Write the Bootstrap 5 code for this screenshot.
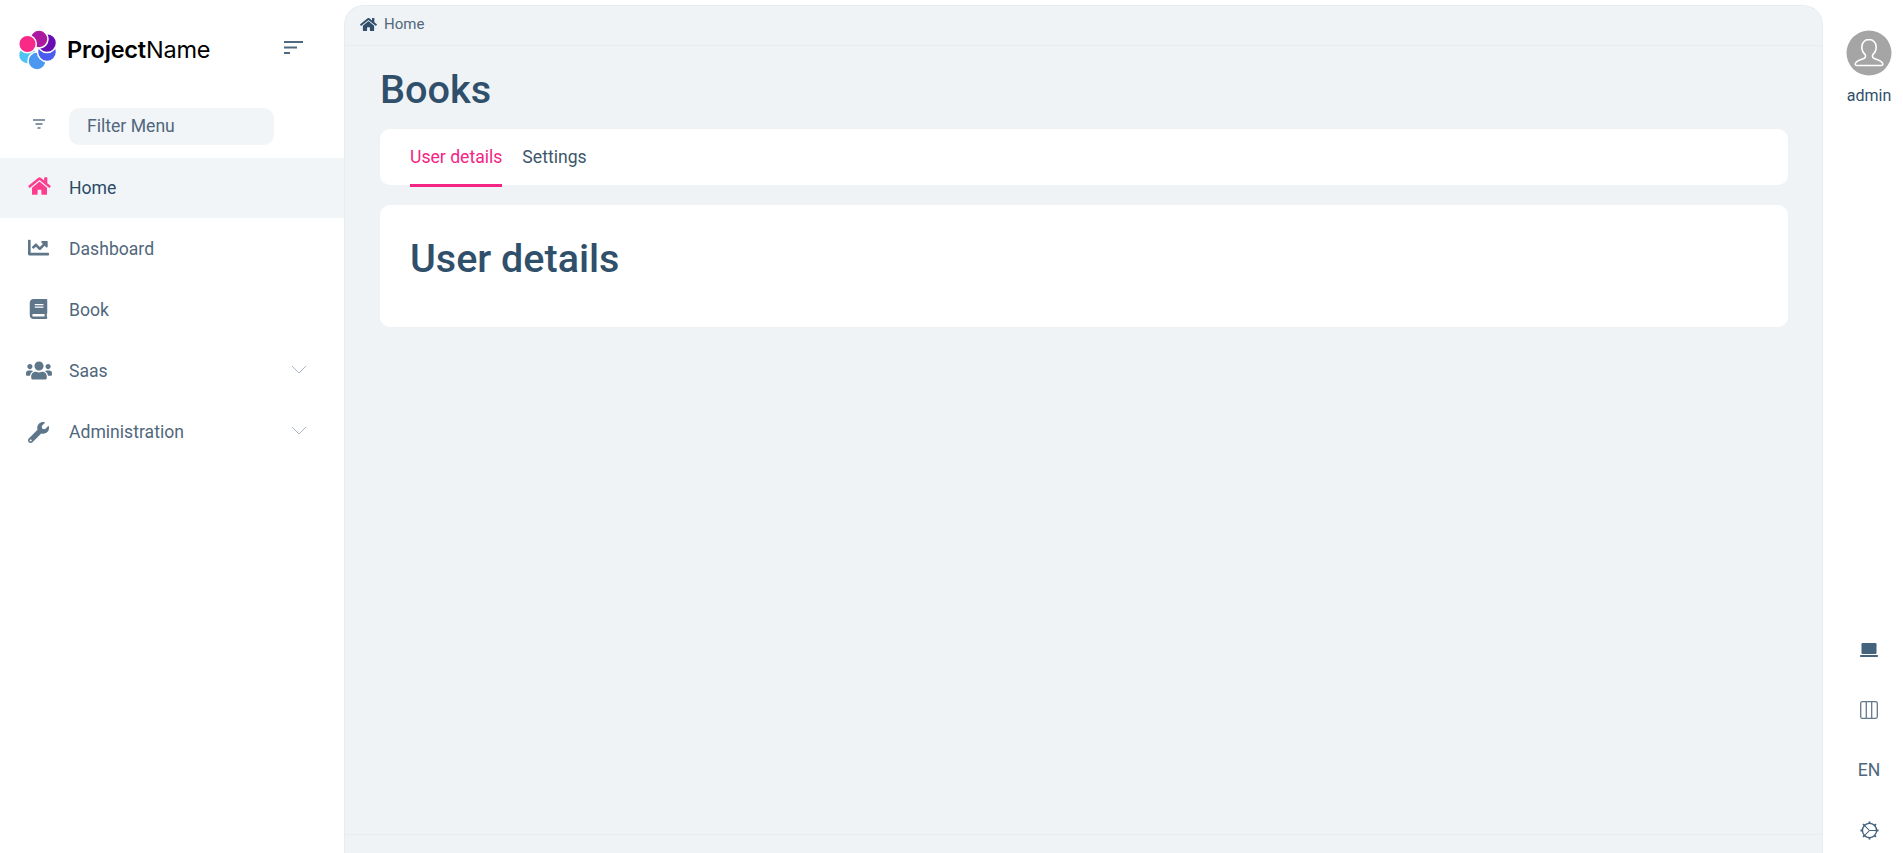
<!DOCTYPE html>
<html lang="en">
<head>
  <meta charset="UTF-8">
  <meta name="viewport" content="width=device-width, initial-scale=1">
  <title>Books - ProjectName</title>
  <link href="https://cdn.jsdelivr.net/npm/bootstrap@5.3.0/dist/css/bootstrap.min.css" rel="stylesheet">
  <style>
    body { font-family: Roboto, "Liberation Sans", sans-serif; color: #2f4f6b; background: #fff; }
    .app-shell { height: 853px; overflow: hidden; }
    .side-menu { width: 344px; flex-shrink: 0; }
    .brand-row { height: 100px; padding: 30px 40px 0 19px; }
    .brand-name { font-family: Inter, sans-serif; font-size: 23.5px; letter-spacing: -.2px; color: #000; margin-left: 10px; line-height: 40px; }
    .brand-toggle { margin-left: auto; margin-top: -2px; }
    .filter-row { height: 58px; padding: 8px 0 0 32px; }
    .filter-box { width: 205px; height: 37px; margin-left: 23px; background: #f2f5f8; border-radius: 10px; padding-left: 18px; line-height: 37px; font-size: 17.6px; color: #50677c; }
    .menu-row { height: 61px; color: #50677c; font-size: 17.6px; text-decoration: none; padding-right: 37px; }
    .menu-row.is-active { height: 60px; background: #f2f5f8; color: #2a4a66; margin-bottom: 1px; }
    .menu-icon { width: 69px; flex-shrink: 0; }
    .menu-icon svg { fill: #5e7689; margin-left: 28px; display: block; }
    .menu-icon svg.icon-wide { margin-left: 26px; }
    .is-active .menu-icon svg { fill: #ff3d8f; }
    .menu-arrow { margin-left: auto; margin-bottom: 3px; }
    .nudge-up { margin-bottom: 3px; }
    .main-panel { background: #eff3f6; border: 1px solid #e7ecf1; border-bottom: 0; border-radius: 20px 20px 0 0; margin-top: 5px; min-width: 0; }
    .crumb-bar { height: 40px; border-bottom: 1px solid #e7ecf1; padding: 0 0 2px 15px; font-size: 15px; color: #50677c; }
    .crumb-bar svg { fill: #2f4f6b; margin-right: 7px; }
    .page-body { padding: 0 34px 0 35px; }
    .page-title { font-size: 39.7px; font-weight: 500; color: #2f4f6b; line-height: 1.2; margin: 20px 0 15px; }
    .tab-card { background: #fff; border-radius: 10px; height: 56px; padding-left: 30px; margin-bottom: 20px; }
    .tab-link { font-size: 17.6px; color: #3c566c; margin-right: 20px; line-height: 56px; height: 58px; text-decoration: none; }
    .tab-link.is-on { color: #f32484; border-bottom: 3px solid #f32484; }
    .detail-card { background: #fff; border-radius: 10px; height: 122px; padding: 30px; }
    .detail-card h2 { font-size: 39.5px; font-weight: 500; color: #2f4f6b; line-height: 1.2; margin: 0; }
    .foot-line { height: 19px; border-top: 1px solid #e7ecf1; }
    .right-rail { width: 80px; flex-shrink: 0; padding-left: 12px; }
    .user-pic { margin-top: 30px; }
    .admin-name { font-size: 16px; color: #2f4f6b; margin-top: 8px; }
    .rail-tools { margin-bottom: -7px; }
    .rail-btn { height: 60px; font-size: 17.6px; color: #50677c; }
  </style>
</head>
<body>

<div class="app-shell d-flex">

  <div class="side-menu d-flex flex-column">
    <div class="brand-row d-flex align-items-start">
      <svg width="38" height="40" viewBox="0 0 38 40">
        <g stroke="#fff" stroke-width="1.5">
          <circle cx="8.5" cy="25" r="9" fill="#4fc3f1"/>
          <circle cx="18" cy="31" r="9" fill="#4a98f2"/>
          <circle cx="28" cy="22" r="9.5" fill="#4a5cf0"/>
          <circle cx="28" cy="13" r="9.5" fill="#6a0db0"/>
          <circle cx="20" cy="9" r="9" fill="#ab1a9e"/>
          <circle cx="8.5" cy="14" r="8.8" fill="#f92a87"/>
        </g>
      </svg>
      <span class="brand-name"><b class="fw-semibold">Project</b>Name</span>
      <svg class="brand-toggle" width="22" height="40" viewBox="0 0 22 40" stroke="#4f6a80" stroke-width="2"><path d="M2 14h19M2 19.5h13M2 25h6"/></svg>
    </div>
    <div class="filter-row d-flex">
      <svg class="mt-2" width="14" height="21" viewBox="0 0 14 21" stroke="#5e7689" stroke-width="1.4"><path d="M1 4h12M3.5 8h7M5.5 12h3"/></svg>
      <div class="filter-box">Filter Menu</div>
    </div>

    <a href="#" class="menu-row is-active d-flex align-items-center">
      <span class="menu-icon mb-1"><svg width="23" height="20" viewBox="0 0 576 512"><path d="M280.37 148.26L96 300.11V464a16 16 0 0 0 16 16l112.06-.29a16 16 0 0 0 15.92-16V368a16 16 0 0 1 16-16h64a16 16 0 0 1 16 16v95.64a16 16 0 0 0 16 16.05L464 480a16 16 0 0 0 16-16V300L295.67 148.26a12.19 12.19 0 0 0-15.3 0zM571.6 251.47L488 182.56V44.05a12 12 0 0 0-12-12h-56a12 12 0 0 0-12 12v72.61L318.47 43a48 48 0 0 0-61 0L4.34 251.47a12 12 0 0 0-1.6 16.9l25.5 31A12 12 0 0 0 45.15 301l235.22-193.74a12.19 12.19 0 0 1 15.3 0L530.9 301a12 12 0 0 0 16.9-1.6l25.5-31a12 12 0 0 0-1.7-16.93z"/></svg></span>
      Home
    </a>
    <a href="#" class="menu-row d-flex align-items-center">
      <span class="menu-icon mb-1"><svg width="21" height="21" viewBox="0 0 512 512"><path d="M496 384H64V80c0-8.84-7.16-16-16-16H16C7.16 64 0 71.16 0 80v336c0 17.67 14.33 32 32 32h464c8.84 0 16-7.16 16-16v-32c0-8.84-7.16-16-16-16zM464 96H345.94c-21.38 0-32.09 25.85-16.97 40.97l32.4 32.4L288 242.75l-73.37-73.37c-12.5-12.5-32.76-12.5-45.25 0l-68.69 68.69c-6.25 6.25-6.25 16.38 0 22.63l22.62 22.62c6.25 6.25 16.38 6.25 22.63 0L192 237.25l73.37 73.37c12.5 12.5 32.76 12.5 45.25 0l96-96 32.4 32.4c15.12 15.12 40.97 4.41 40.97-16.97V112c.01-8.84-7.15-16-15.99-16z"/></svg></span>
      Dashboard
    </a>
    <a href="#" class="menu-row d-flex align-items-center">
      <span class="menu-icon mb-1"><svg width="21" height="20" viewBox="0 0 448 512"><path d="M448 360V24c0-13.3-10.7-24-24-24H96C43 0 0 43 0 96v320c0 53 43 96 96 96h328c13.3 0 24-10.7 24-24v-16c0-7.5-3.5-14.3-8.9-18.7-4.2-15.4-4.2-59.3 0-74.7 5.4-4.3 8.9-11.1 8.9-18.6zM128 134c0-3.3 2.7-6 6-6h212c3.3 0 6 2.7 6 6v20c0 3.3-2.7 6-6 6H134c-3.3 0-6-2.7-6-6v-20zm0 64c0-3.3 2.7-6 6-6h212c3.3 0 6 2.7 6 6v20c0 3.3-2.7 6-6 6H134c-3.3 0-6-2.7-6-6v-20zm253.4 250H96c-17.7 0-32-14.3-32-32 0-17.6 14.4-32 32-32h285.4c-1.9 17.1-1.9 46.9 0 64z"/></svg></span>
      Book
    </a>
    <a href="#" class="menu-row d-flex align-items-center">
      <span class="menu-icon nudge-up"><svg class="icon-wide" width="26" height="21" viewBox="0 0 640 512"><path d="M96 224c35.3 0 64-28.7 64-64s-28.7-64-64-64-64 28.7-64 64 28.7 64 64 64zm448 0c35.3 0 64-28.7 64-64s-28.7-64-64-64-64 28.7-64 64 28.7 64 64 64zm32 32h-64c-17.6 0-33.5 7.1-45.1 18.6 40.3 22.1 68.9 62 75.1 109.4h66c17.7 0 32-14.3 32-32v-32c0-35.3-28.7-64-64-64zm-256 0c61.9 0 112-50.1 112-112S381.9 32 320 32 208 82.1 208 144s50.1 112 112 112zm76.8 32h-8.3c-20.8 10-43.9 16-68.5 16s-47.6-6-68.5-16h-8.3C179.6 288 128 339.6 128 403.2V432c0 26.5 21.5 48 48 48h288c26.5 0 48-21.5 48-48v-28.8c0-63.6-51.6-115.2-115.2-115.2zm-223.7-13.4C161.5 263.1 145.6 256 128 256H64c-35.3 0-64 28.7-64 64v32c0 17.7 14.3 32 32 32h65.9c6.3-47.4 34.9-87.3 75.2-109.4z"/></svg></span>
      Saas
      <svg class="menu-arrow" width="16" height="10" viewBox="0 0 16 10" fill="none" stroke="#aab8c5" stroke-width="1"><path d="M1 1l7 7 7-7"/></svg>
    </a>
    <a href="#" class="menu-row d-flex align-items-center">
      <span class="menu-icon"><svg width="21" height="21" viewBox="0 0 512 512"><path d="M507.73 109.1c-2.24-9.03-13.54-12.09-20.12-5.51l-74.36 74.36-67.88-11.31-11.31-67.88 74.36-74.36c6.62-6.62 3.43-17.9-5.66-20.16-47.38-11.74-99.55.91-136.58 37.93-39.64 39.64-50.55 97.1-34.05 147.2L18.74 402.76c-24.99 24.99-24.99 65.51 0 90.5 24.99 24.99 65.51 24.99 90.5 0l213.21-213.21c50.12 16.71 107.47 5.68 147.37-34.22 37.07-37.07 49.7-89.32 37.91-136.73zM64 472c-13.25 0-24-10.75-24-24 0-13.26 10.75-24 24-24s24 10.74 24 24c0 13.25-10.75 24-24 24z"/></svg></span>
      Administration
      <svg class="menu-arrow" width="16" height="10" viewBox="0 0 16 10" fill="none" stroke="#aab8c5" stroke-width="1"><path d="M1 1l7 7 7-7"/></svg>
    </a>
  </div>

  <div class="main-panel flex-grow-1 d-flex flex-column">
    <div class="crumb-bar d-flex align-items-center flex-shrink-0">
      <svg width="17" height="15" viewBox="0 0 576 512"><path d="M280.37 148.26L96 300.11V464a16 16 0 0 0 16 16l112.06-.29a16 16 0 0 0 15.92-16V368a16 16 0 0 1 16-16h64a16 16 0 0 1 16 16v95.64a16 16 0 0 0 16 16.05L464 480a16 16 0 0 0 16-16V300L295.67 148.26a12.19 12.19 0 0 0-15.3 0zM571.6 251.47L488 182.56V44.05a12 12 0 0 0-12-12h-56a12 12 0 0 0-12 12v72.61L318.47 43a48 48 0 0 0-61 0L4.34 251.47a12 12 0 0 0-1.6 16.9l25.5 31A12 12 0 0 0 45.15 301l235.22-193.74a12.19 12.19 0 0 1 15.3 0L530.9 301a12 12 0 0 0 16.9-1.6l25.5-31a12 12 0 0 0-1.7-16.93z"/></svg>
      Home
    </div>
    <div class="page-body flex-grow-1">
      <h1 class="page-title">Books</h1>
      <div class="tab-card d-flex">
        <a href="#" class="tab-link is-on">User details</a>
        <a href="#" class="tab-link">Settings</a>
      </div>
      <div class="detail-card">
        <h2>User details</h2>
      </div>
    </div>
    <div class="foot-line flex-shrink-0"></div>
  </div>

  <div class="right-rail d-flex flex-column align-items-center">
    <svg class="user-pic flex-shrink-0" width="46" height="46" viewBox="0 0 46 46">
      <circle cx="23" cy="23" r="22.5" fill="#a5a5a5"/>
      <path d="M23 9.5c-4.4 0-7.2 3.3-7.2 7.6 0 3.2 1.6 6 3.4 7.6.7 1.1.4 2.7-1 3.5-3 1.4-8.6 2.6-9 5.6-.1 1 .6 1.7 1.6 1.7h24.4c1 0 1.7-.7 1.6-1.7-.4-3-6-4.2-9-5.6-1.4-.8-1.7-2.4-1-3.5 1.8-1.6 3.4-4.4 3.4-7.6 0-4.3-2.8-7.6-7.2-7.6z" fill="none" stroke="#fff" stroke-width="1.6"/>
    </svg>
    <div class="admin-name">admin</div>
    <div class="rail-tools mt-auto w-100 d-flex flex-column align-items-center">
      <div class="rail-btn d-flex align-items-center">
        <svg width="18" height="14" viewBox="0 0 18 14" fill="#44637c"><rect x="1.5" y="0" width="15" height="11" rx="1.2"/><rect x="0" y="12" width="18" height="2" rx=".8"/></svg>
      </div>
      <div class="rail-btn d-flex align-items-center">
        <svg width="18" height="18" viewBox="0 0 18 18" fill="none" stroke="#64798c" stroke-width="1.3"><rect x=".7" y=".7" width="16.6" height="16.6" rx="1.5"/><path d="M6.3 1v16M11.7 1v16"/></svg>
      </div>
      <div class="rail-btn d-flex align-items-center">EN</div>
      <div class="rail-btn d-flex align-items-center">
        <svg width="19" height="19" viewBox="0 0 18 18" fill="none" stroke="#44637c" stroke-width="1.3"><circle cx="9" cy="9" r="6.7"/><path d="M9 9L4.4 4.4M9 9h6.7M9 9l-4.6 4.6" stroke-width="1"/><path d="M9 .4v2M9 15.6v2M.4 9h2M15.6 9h2M2.9 2.9l1.5 1.5M13.6 13.6l1.5 1.5M2.9 15.1l1.5-1.5M13.6 4.4l1.5-1.5" stroke-width="1.8"/></svg>
      </div>
    </div>
  </div>

</div>

<script src="https://cdn.jsdelivr.net/npm/bootstrap@5.3.0/dist/js/bootstrap.bundle.min.js"></script>
</body>
</html>
